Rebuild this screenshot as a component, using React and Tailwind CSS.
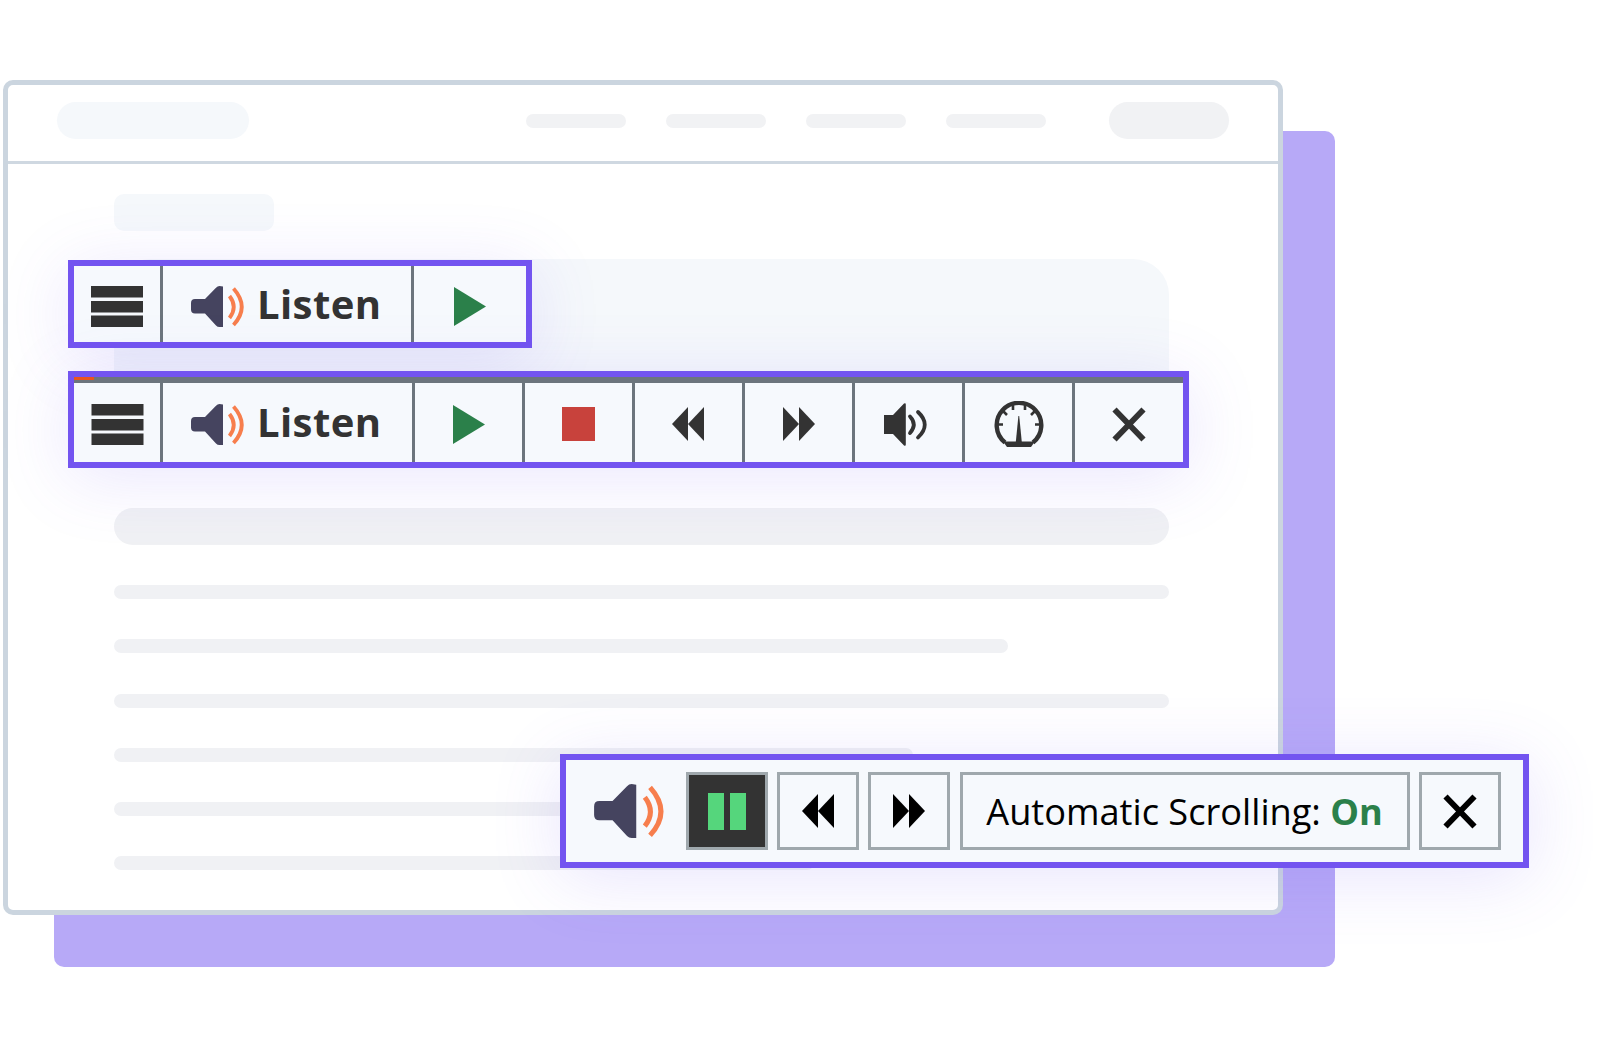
const SpeakerIcon = ({ className }) => (
  <svg viewBox="0 0 53 41" className={className}>
    <path d="M32 0.5 V41 H28.5 Q26.5 41 25 39.5 L14 27.5 H4 Q0 27.5 0 23.5 V17 Q0 13 4 13 H14 L25 1.8 Q26.5 0 28.5 0 Z" fill="#45445f" />
    <path d="M38.5 10 Q47 21 38.5 32" fill="none" stroke="#f77e4d" strokeWidth="3.8" />
    <path d="M42.5 2.5 Q59 21 42.5 39" fill="none" stroke="#f77e4d" strokeWidth="3.8" />
  </svg>
);

const MenuIcon = ({ className }) => (
  <svg viewBox="0 0 52 41" className={className} fill="#333333">
    <rect x="0" y="0" width="52" height="11.5" />
    <rect x="0" y="15" width="52" height="11.5" />
    <rect x="0" y="29.5" width="52" height="11.5" />
  </svg>
);

const PlayIcon = ({ className }) => (
  <svg viewBox="0 0 32 39" className={className}>
    <path d="M0 0 L32 19.5 L0 39 Z" fill="#2b804a" />
  </svg>
);

const RewindIcon = ({ className, fill }) => (
  <svg viewBox="0 0 32 34" className={className} fill={fill}>
    <path d="M16 0 V34 L0 17 Z" />
    <path d="M32 0 V34 L16 17 Z" />
  </svg>
);

const ForwardIcon = ({ className, fill }) => (
  <svg viewBox="0 0 32 34" className={className} fill={fill}>
    <path d="M0 0 V34 L16 17 Z" />
    <path d="M16 0 V34 L32 17 Z" />
  </svg>
);

const VolumeIcon = ({ className }) => (
  <svg viewBox="0 0 43 43" className={className}>
    <path d="M0 12 H9 L20 0.5 Q21.8 -0.5 21.8 1.5 V41.5 Q21.8 43.5 20 42.5 L9 31 H0 Z" fill="#333333" />
    <path d="M26 13.5 Q33.5 21.5 26 30" fill="none" stroke="#333333" strokeWidth="3.8" strokeLinecap="round" />
    <path d="M34 9 Q47.5 21.5 34 34.5" fill="none" stroke="#333333" strokeWidth="3.8" strokeLinecap="round" />
  </svg>
);

const GaugeIcon = ({ className }) => (
  <svg viewBox="0 0 50 47" className={className}>
    <path d="M11 41.5 A22.3 22.3 0 1 1 39 41.5" fill="none" stroke="#333333" strokeWidth="4.4" />
    <path d="M9 40.5 H41 L37 46 H13 Z" fill="#333333" />
    <path d="M24.4 15 H25.2 L27.8 41 H21.8 Z" fill="#333333" />
    <path d="M19 4 V9 M31 4 V9 M9.5 10.5 L13 14 M40.5 10.5 L37 14 M3 23.5 H9 M47 23.5 H41" stroke="#333333" strokeWidth="2.6" />
  </svg>
);

const CloseIcon = ({ className, stroke }) => (
  <svg viewBox="0 0 36 37" className={className}>
    <path d="M3.5 3.5 L32.5 33.5 M32.5 3.5 L3.5 33.5" fill="none" stroke={stroke} strokeWidth="5.8" />
  </svg>
);

const Line = ({ className }) => <div className={`h-[14px] rounded-full bg-[#f0f1f4] ${className}`} />;

const Cell = ({ className, children }) => (
  <div className={`flex h-full items-center justify-center border-r-[3px] border-[#6c757d] ${className}`}>{children}</div>
);

const ListenLabel = () => (
  <div className="flex items-center gap-[13px]">
    <SpeakerIcon className="h-[41px] w-[53px]" />
    <span className="mb-[5px] font-['Open_Sans',sans-serif] text-[40px] leading-none font-bold tracking-[0.4px] text-[#333333]">Listen</span>
  </div>
);

const OutlineButton = ({ className, children }) => (
  <div className={`flex h-[78px] items-center justify-center border-[3px] border-[#9fa8ad] ${className}`}>{children}</div>
);

export default function App() {
  return (
    <div className="relative h-[1048px] w-[1600px] overflow-hidden bg-white">
      {/* purple sheet behind the page */}
      <div className="absolute top-[131px] left-[54px] h-[836px] w-[1281px] rounded-[10px] bg-[#b7a9f7]" />

      {/* browser window */}
      <div className="absolute top-[80px] left-[3px] h-[835px] w-[1280px] rounded-[10px] border-[5px] border-[#cbd5df] bg-white">
        <div className="flex h-[79px] items-center border-b-[3px] border-[#cfd8e1] pb-[5px] pl-[49px]">
          <div className="h-[37px] w-[192px] rounded-full bg-[#f5f8fb]" />
          <div className="ml-[277px] flex gap-[40px]">
            <div className="h-[14px] w-[100px] rounded-full bg-[#f1f2f4]" />
            <div className="h-[14px] w-[100px] rounded-full bg-[#f1f2f4]" />
            <div className="h-[14px] w-[100px] rounded-full bg-[#f1f2f4]" />
            <div className="h-[14px] w-[100px] rounded-full bg-[#f1f2f4]" />
          </div>
          <div className="ml-[63px] h-[37px] w-[120px] rounded-full bg-[#f1f2f4]" />
        </div>

        <div className="flex flex-col pt-[30px] pr-[109px] pl-[106px]">
          <div className="h-[37px] w-[160px] rounded-[10px] bg-[#f5f8fb]" />
          <div className="mt-[28px] h-[205px] rounded-t-[36px] bg-[#f5f8fb]" />
          <div className="mt-[44px] h-[37px] rounded-full bg-[#f0f1f4]" />
          <Line className="mt-[40px]" />
          <Line className="mt-[40px] w-[894px]" />
          <Line className="mt-[41px]" />
          <Line className="mt-[40px] w-[799px]" />
          <Line className="mt-[40px] w-[700px]" />
          <Line className="mt-[40px] w-[700px]" />
        </div>
      </div>

      {/* collapsed player */}
      <div className="absolute top-[260px] left-[68px] flex h-[88px] w-[464px] border-[6px] border-[#7354f0] bg-[#f6f9fd] shadow-[0_10px_70px_rgba(115,84,240,0.15)]">
        <Cell className="w-[89px] pt-[4px]">
          <MenuIcon className="h-[41px] w-[52px]" />
        </Cell>
        <Cell className="w-[251px] justify-start pt-[4px] pl-[28px]">
          <ListenLabel />
        </Cell>
        <div className="flex flex-1 items-center justify-center pt-[4px]">
          <PlayIcon className="h-[39px] w-[32px]" />
        </div>
      </div>

      {/* expanded player */}
      <div className="absolute top-[371px] left-[68px] flex h-[97px] w-[1121px] flex-col border-[6px] border-[#7354f0] bg-[#f6f9fd] shadow-[0_10px_70px_rgba(115,84,240,0.15)]">
        <div className="h-[6px] bg-[#6c757d]">
          <div className="h-[3px] w-[20px] bg-[#e8541e]" />
        </div>
        <div className="flex flex-1">
          <Cell className="w-[89px] pt-[3px]">
            <MenuIcon className="h-[41px] w-[53px]" />
          </Cell>
          <Cell className="w-[252px] justify-start pt-[3px] pl-[28px]">
            <ListenLabel />
          </Cell>
          <Cell className="w-[110px] pt-[3px]">
            <PlayIcon className="h-[39px] w-[32px]" />
          </Cell>
          <Cell className="w-[110px] pt-[3px]">
            <div className="h-[34px] w-[33px] bg-[#c8423c]" />
          </Cell>
          <Cell className="w-[110px] pt-[3px] pr-[2px]">
            <RewindIcon className="h-[34px] w-[32px]" fill="#333333" />
          </Cell>
          <Cell className="w-[110px] pt-[3px]">
            <ForwardIcon className="h-[34px] w-[32px]" fill="#333333" />
          </Cell>
          <Cell className="w-[110px] pt-[3px] pr-[7px]">
            <VolumeIcon className="h-[43px] w-[43px]" />
          </Cell>
          <Cell className="w-[110px] pt-[3px]">
            <GaugeIcon className="h-[47px] w-[50px]" />
          </Cell>
          <div className="flex flex-1 items-center justify-center pt-[3px]">
            <CloseIcon className="h-[37px] w-[36px]" stroke="#333333" />
          </div>
        </div>
      </div>

      {/* scrolling player */}
      <div className="absolute top-[754px] left-[560px] flex h-[114px] w-[969px] items-center border-[6px] border-[#7354f0] bg-[#f6f9fd] pl-[27px] shadow-[0_10px_70px_rgba(115,84,240,0.16)]">
        <SpeakerIcon className="h-[54px] w-[72px]" />
        <div className="ml-[21px] flex gap-[9.2px]">
          <OutlineButton className="w-[82px] gap-[6px] bg-[#333333]">
            <div className="h-[37px] w-[16px] bg-[#55d67c]" />
            <div className="h-[37px] w-[16px] bg-[#55d67c]" />
          </OutlineButton>
          <OutlineButton className="w-[82px]">
            <RewindIcon className="h-[34px] w-[32px]" fill="#000000" />
          </OutlineButton>
          <OutlineButton className="w-[82px]">
            <ForwardIcon className="h-[34px] w-[32px]" fill="#000000" />
          </OutlineButton>
          <OutlineButton className="w-[450px]">
            <span className="font-['Open_Sans',sans-serif] text-[36.2px] leading-none text-black">
              Automatic Scrolling: <span className="font-bold text-[#2b804a]">On</span>
            </span>
          </OutlineButton>
          <OutlineButton className="w-[82px]">
            <CloseIcon className="h-[37px] w-[36px]" stroke="#000000" />
          </OutlineButton>
        </div>
      </div>
    </div>
  );
}
